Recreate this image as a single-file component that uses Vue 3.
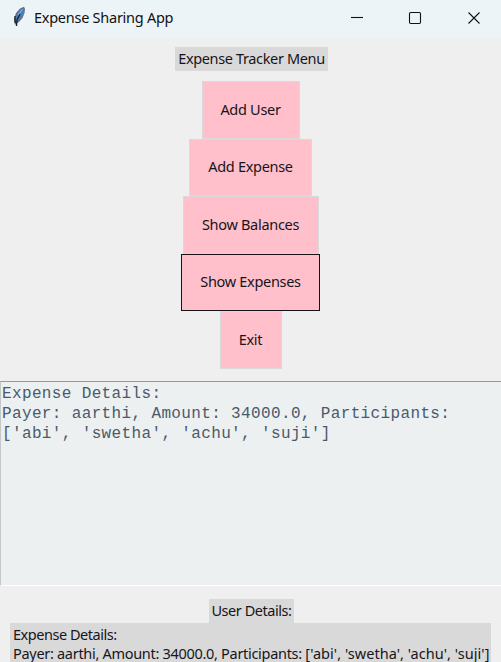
<script setup>
const actions = [
  { label: 'Add User', size: 'w-user' },
  { label: 'Add Expense', size: 'w-expense' },
  { label: 'Show Balances', size: 'w-balances' },
  { label: 'Show Expenses', size: 'w-expenses', active: true },
  { label: 'Exit', size: 'w-exit' },
]
const participants = "['abi', 'swetha', 'achu', 'suji']"
const payerLine = 'Payer: aarthi, Amount: 34000.0, Participants:'
</script>

<template>
  <div class="window">
    <header class="titlebar">
      <svg class="feather" width="16" height="22" viewBox="0 0 16 22">
        <path d="M3 19 2 13 4 7 8 2.5 12 .8 13 3 12.5 7 10.5 12 7 16 5 17Z" fill="#67707a" />
        <path d="M4 13 6 7 9 3.5 11.5 2 11.5 6 9.5 10 6 15Z" fill="#3f85d5" />
        <path d="M6 9 9 5 10.5 3.5" stroke="#9bbde4" stroke-width="1" fill="none" />
        <path d="M4.5 20 5 14 8 8M3 10v6l2 1" stroke="#17202b" stroke-width="1.3" fill="none" />
      </svg>
      <span class="title">Expense Sharing App</span>
      <svg class="controls" width="132" height="16" viewBox="0 0 132 16" fill="none" stroke="#111" stroke-width="1.1">
        <path d="M1 7.5H13" />
        <rect x="59.5" y="2.5" width="11" height="11" rx="1.2" />
        <path d="M118.5 2.5 129.5 13.5M129.5 2.5 118.5 13.5" />
      </svg>
    </header>
    <div class="label menu-label">Expense Tracker Menu</div>
    <nav class="menu">
      <button v-for="a in actions" :key="a.label" :class="[a.size, { active: a.active }]">{{ a.label }}</button>
    </nav>
    <div class="output">
      <div>Expense Details:</div>
      <div>{{ payerLine }}</div>
      <div>{{ participants }}</div>
    </div>
    <div class="label user-label">User Details:</div>
    <div class="details">
      <div class="heading">Expense Details:</div>
      <div class="row"><span>{{ payerLine }}</span>&nbsp;<span class="names">{{ participants }}</span></div>
    </div>
  </div>
</template>

<style>
body { background: #efefef; overflow: hidden; }
</style>

<style scoped>
.window {
  width: 501px;
  height: 662px;
  overflow: hidden;
  display: flex;
  flex-direction: column;
  align-items: center;
  background: #efefef;
  color: #17151a;
  font-family: "Noto Sans", sans-serif;
  font-size: 14.5px;
  letter-spacing: -0.3px;
  white-space: nowrap;
}
.window > * { flex-shrink: 0; box-sizing: border-box; }
.titlebar {
  width: 501px;
  height: 38px;
  padding: 0 19px 2px 12px;
  display: flex;
  align-items: center;
  background: #ecf4f8;
}
.feather { margin: -3px 6px 0 0; }
.title { margin-top: -2px; font-size: 14.5px; letter-spacing: -0.26px; color: #111; }
.controls { margin-left: auto; }
.label {
  display: flex;
  justify-content: center;
  align-items: center;
  height: 24px;
  padding-bottom: 2px;
  background: #d9d9d9;
}
.menu-label { width: 153px; margin-top: 9px; margin-left: 2px; letter-spacing: -0.36px; }
.menu {
  display: flex;
  flex-direction: column;
  align-items: center;
  margin-top: 10px;
}
.menu button {
  box-sizing: border-box;
  height: 57.5px;
  padding: 0 0 2px;
  border: 1px solid #d9d9d9;
  border-radius: 0;
  background: #ffc0cb;
  color: inherit;
  font: inherit;
  letter-spacing: inherit;
}
.menu button.active { border-color: #171315; }
.w-user { width: 98px; }
.w-expense { width: 123px; }
.w-balances { width: 136px; }
.w-expenses { width: 139px; }
.w-exit { width: 62px; }
.output {
  width: 501px;
  height: 205px;
  margin-top: 12.5px;
  padding: 2px 0 0 1px;
  border-top: 1px solid #999;
  border-left: 1px solid #c4c7c8;
  border-bottom: 1px solid #fff;
  background: #ecf0f1;
  color: #4a5a6b;
  font-family: "Liberation Mono", monospace;
  font-size: 16px;
  letter-spacing: 0.36px;
  line-height: 20px;
}
.user-label { width: 85px; margin-top: 13px; margin-left: 2px; letter-spacing: -0.45px; }
.details {
  width: 481px;
  height: 40px;
  padding: 2px 0 0 3px;
  background: #d9d9d9;
  line-height: 18.5px;
}
.heading { letter-spacing: -0.47px; }
.names { letter-spacing: 0.05px; }
</style>
